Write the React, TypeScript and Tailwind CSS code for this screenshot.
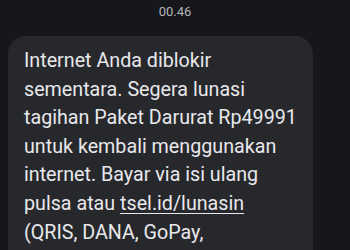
import React from "react";

const App = () => {
  return (
    <div className="w-[350px] h-[250px] overflow-hidden bg-[#16171b] font-['Roboto',sans-serif]">
      <div className="pt-[5px] text-center text-[13px] leading-[14px] text-[#b4b5ba]">00.46</div>
      <div className="mt-[17px] ml-[8px] w-[305px] rounded-[18px] bg-[#27282c] pl-[16px] pr-[16px] pt-[11px] pb-4">
        <p className="text-[19.7px] leading-[28.6px] text-[#e8e8ec]">
          Internet Anda diblokir sementara. Segera lunasi tagihan Paket Darurat Rp49991 untuk kembali menggunakan
          internet. Bayar via isi ulang pulsa atau{" "}
          <span className="underline underline-offset-[3px] decoration-1">tsel.id/lunasin</span> (QRIS, DANA, GoPay,
          ShopeePay, LinkAja)
        </p>
      </div>
    </div>
  );
};

export default App;
